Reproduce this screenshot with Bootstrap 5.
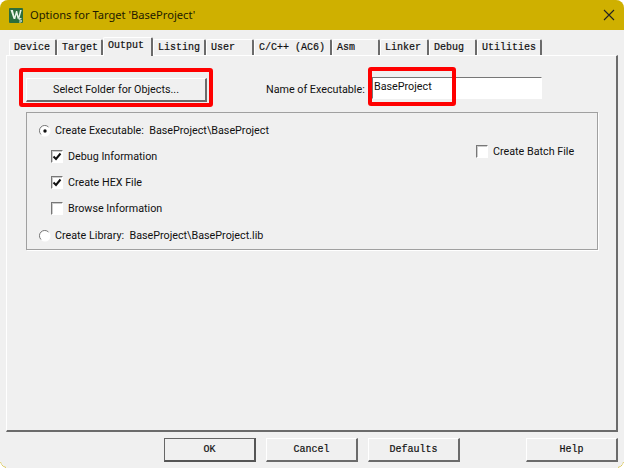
<!DOCTYPE html>
<html lang="en">
<head>
<meta charset="utf-8">
<title>Options for Target</title>
<link rel="stylesheet" href="https://cdn.jsdelivr.net/npm/bootstrap@5.3.0/dist/css/bootstrap.min.css">
<style>
html,body{height:100%;margin:0;background:#fff;overflow:hidden}
.dlg{width:624px;height:468px;background:#f0f0f0;border-radius:8px;overflow:hidden;font-family:"Roboto","Liberation Sans",Arial,sans-serif;font-size:10.75px;color:#111;display:flex;flex-direction:column;position:relative}
.cnr{position:absolute;bottom:0;width:6px;height:6px;border-bottom:1px solid #cfb000}
.cnr.l{left:0;border-left:1px solid #cfb000;border-bottom-left-radius:8px}
.cnr.r{right:0;border-right:1px solid #cfb000;border-bottom-right-radius:8px}
.ttl{height:30px;flex:none;background:#cfb000;color:#1d1a00;font-family:"Noto Sans","Liberation Sans",sans-serif;font-size:11.15px;padding-left:9px;gap:7px}
.xbtn{margin-left:auto;margin-right:8px;width:14px;height:14px;display:block}
.tabstrip{height:25px;flex:none;padding:7px 0 0 9px;align-items:flex-end;font-family:"Liberation Mono","DejaVu Sans Mono",monospace;font-size:10px;font-weight:400;-webkit-text-stroke:.2px #111}
.tb{height:16px;border:1px solid #fff;border-right:2px solid #6b6b6b;border-bottom:0;border-radius:2px 2px 0 0;padding-left:4px;line-height:15px;white-space:nowrap;color:#111}
.tb.sel{height:19px;position:relative;z-index:2;margin-bottom:-1px;background:#f0f0f0;line-height:15px}
.panel{height:377px;flex:none;margin-left:6px;width:612px;border-top:1px solid #fff;border-left:1px solid #fff;border-right:2px solid #6b6b6b;border-bottom:2px solid #6b6b6b;position:relative;padding:20px 19px 0 19px}
.toprow{height:36px;align-items:flex-start}
.wbtn{background:#f0f0f0;border:1px solid #fff;border-right:2px solid #6b6b6b;border-bottom:2px solid #6b6b6b;border-radius:0;padding:0;color:#111;line-height:1}
.selbtn{width:181px;height:24px;font-size:10.75px;margin-top:2px;padding-top:1px}
.lblx{margin-left:59px;width:106px;line-height:27px;white-space:nowrap}
.nameinp{width:170px;height:22px;margin-top:1px;background:#fff;border:1px solid #fff;border-top:1px solid #777;border-left:1px solid #777;padding:0 0 4px 1px;font-size:10.75px;border-radius:0;color:#111;outline:none;box-shadow:none;line-height:1}
.redbox{position:absolute;border:4px solid #f00;border-radius:3px;pointer-events:none}
.rb1{left:12px;top:12px;width:194px;height:39px}
.rb2{left:361px;top:11px;width:88px;height:39px}
.grp{width:572px;height:138px;border:1px solid #a0a0a0;box-shadow:1px 1px 0 #fff;position:relative;padding:10px 0 0 12px}
.rowx{height:26px;align-items:flex-start;gap:4px;white-space:nowrap;line-height:16px}
.rowx.ind{padding-left:12px;gap:5px}
.rowx.lastr{margin-top:1px}
.batch{position:absolute;left:449px;top:31px;gap:5px;white-space:nowrap;line-height:16px}
.cb{width:12px;height:13px;margin-top:1px;flex:none;display:block;background:#fff;border:1px solid #fff;border-top:1px solid #777;border-left:1px solid #777;box-shadow:inset 1px 1px 0 #ccc}
.rd{width:12px;height:12px;margin-top:2px;flex:none;display:block}
.foot{flex:1;padding:6px 6px 0 0;align-items:flex-start;font-family:"Liberation Mono","DejaVu Sans Mono",monospace;font-size:10px;-webkit-text-stroke:.2px #111}
.fb{width:92px;height:24px;font-size:10px;font-family:inherit;padding-top:1px}
.fb.def{border:1px solid #666;border-right:2px solid #555;border-bottom:2px solid #555}
</style>
</head>
<body>
<div class="dlg">
  <div class="ttl d-flex align-items-center">
    <svg width="14" height="15" viewBox="0 0 14 15"><rect width="14" height="15" rx="1" fill="#2d6e3c"/><path d="M1.500 2h2.400l1.600 6.500L7 3h1.200l1.400 5.500L11 2h1.700l-2.500 9H8.700L7.500 6.500 6.300 11H4.600z" fill="#e9f3e6"/><path d="M9.500 10.500h3.500v3.500H9.500z" fill="#2d6e3c"/><path d="M12.500 10.500h-2.300v1.500h2v2h-2.200" stroke="#fff" fill="none" stroke-width=".8"/></svg>
    <span>Options for Target 'BaseProject'</span>
    <svg class="xbtn" viewBox="0 0 14 14"><path d="M2 2l10 10M12 2L2 12" stroke="#222" stroke-width="1.100" fill="none"/></svg>
  </div>
  <div class="tabstrip d-flex">
    <div class="tb" style="width:48px">Device</div>
    <div class="tb" style="width:46px">Target</div>
    <div class="tb sel" style="width:50px">Output</div>
    <div class="tb" style="width:53px">Listing</div>
    <div class="tb" style="width:48px">User</div>
    <div class="tb" style="width:78px">C/C++ (AC6)</div>
    <div class="tb" style="width:48px">Asm</div>
    <div class="tb" style="width:49px">Linker</div>
    <div class="tb" style="width:48px">Debug</div>
    <div class="tb" style="width:65px">Utilities</div>
  </div>
  <div class="panel">
    <div class="toprow d-flex">
      <button type="button" class="btn wbtn selbtn">Select Folder for Objects...</button>
      <span class="lblx">Name of Executable:</span>
      <input class="nameinp" type="text" value="BaseProject" aria-label="Name of Executable">
    </div>
    <div class="grp">
      <div class="rowx d-flex"><svg class="rd" viewBox="0 0 12 12"><circle cx="6" cy="6" r="5.500" fill="#fff"/><path d="M2 9.500A5 5 0 0 1 9.500 2" stroke="#777" fill="none"/><circle cx="6" cy="6" r="1.700" fill="#111"/></svg><span>Create Executable:&nbsp; BaseProject\BaseProject</span></div>
      <div class="rowx ind d-flex"><span class="cb"><svg width="10" height="11" viewBox="0 0 10 11" class="d-block"><path d="M1.500 5.500l2.500 2.500L8.500 2.500" stroke="#111" stroke-width="2" fill="none"/></svg></span><span>Debug Information</span></div>
      <div class="rowx ind d-flex"><span class="cb"><svg width="10" height="11" viewBox="0 0 10 11" class="d-block"><path d="M1.500 5.500l2.500 2.500L8.500 2.500" stroke="#111" stroke-width="2" fill="none"/></svg></span><span>Create HEX File</span></div>
      <div class="rowx ind d-flex"><span class="cb"></span><span>Browse Information</span></div>
      <div class="rowx lastr d-flex"><svg class="rd" viewBox="0 0 12 12"><circle cx="6" cy="6" r="5.500" fill="#fff"/><path d="M2 9.500A5 5 0 0 1 9.500 2" stroke="#777" fill="none"/></svg><span>Create Library:&nbsp; BaseProject\BaseProject.lib</span></div>
      <div class="batch d-flex"><span class="cb"></span><span>Create Batch File</span></div>
    </div>
    <div class="redbox rb1"></div>
    <div class="redbox rb2"></div>
  </div>
  <div class="foot d-flex">
    <button type="button" class="btn wbtn fb def" style="margin-left:164px">OK</button>
    <button type="button" class="btn wbtn fb" style="margin-left:10px">Cancel</button>
    <button type="button" class="btn wbtn fb" style="margin-left:10px">Defaults</button>
    <button type="button" class="btn wbtn fb ms-auto">Help</button>
  </div>
  <span class="cnr l"></span><span class="cnr r"></span>
</div>
</body>
</html>
